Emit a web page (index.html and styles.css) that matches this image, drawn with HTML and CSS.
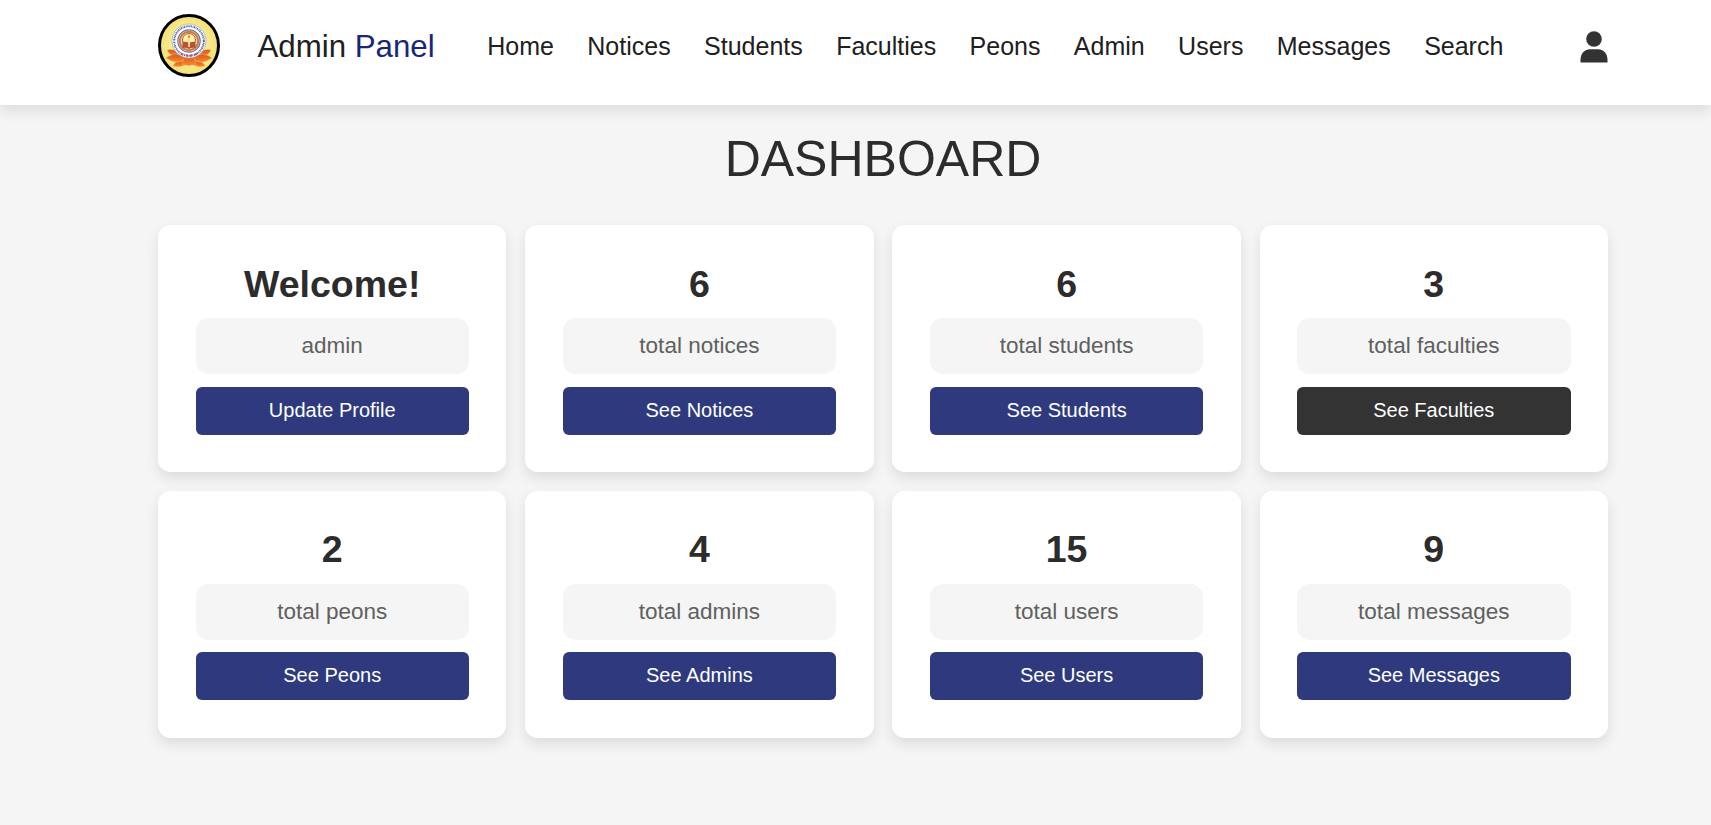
FILE: index.html
```html
<!DOCTYPE html>
<html lang="en">
<head>
<meta charset="utf-8">
<title>Dashboard</title>
<link rel="stylesheet" href="styles.css">
</head>
<body>
<header class="header">
  <svg class="logo" viewBox="0 0 62 63">
    <defs>
      <radialGradient id="bg"><stop offset="0" stop-color="#fffbd0"/><stop offset="1" stop-color="#f3e070"/></radialGradient>
      <linearGradient id="petal" x1="0" y1="0" x2="0" y2="1"><stop offset="0" stop-color="#d9561a"/><stop offset="1" stop-color="#f58b2c"/></linearGradient>
    </defs>
    <ellipse cx="31" cy="31.5" rx="29.5" ry="30" fill="url(#bg)" stroke="#000" stroke-width="3"/>
    <g fill="url(#petal)" stroke="#f6c56a" stroke-width=".4">
      <path d="M9 36q6-2 13 3v4q-10 0-13-7zM53 36q-6-2-13 3v4q10 0 13-7z"/>
      <path d="M15 52q2-6 13-5q-2 8-13 5zM47 52q-2-6-13-5q2 8 13 5z"/>
      <path d="M8 44q9-7 20-1q-6 10-20 1zM54 44q-9-7-20-1q6 10 20 1z"/>
      <path d="M24 52q0-9 7-11q7 2 7 11q-4-2-7 0q-3-2-7 0z"/>
    </g>
    <circle cx="31" cy="27" r="17" fill="#fff" stroke="#9da4b5" stroke-width=".7"/>
    <circle cx="31" cy="27" r="14.8" fill="none" stroke="#5867a5" stroke-width="2" stroke-dasharray="1.3 .7 .8 .6" pathLength="93"/>
    <circle cx="31" cy="27" r="11.2" fill="#eee3d7" stroke="#6876a4" stroke-width="1.2"/>
    <circle cx="31" cy="27" r="9.2" fill="none" stroke="#d77735" stroke-width="2"/>
    <circle cx="31" cy="26" r="6.5" fill="#fff3a5" stroke="#a95a35"/>
    <path d="M24.500 28q3.500-1 6.500 1q3-2 6.500-1v6q-3.500-1-6.500 1q-3-2-6.500-1z" fill="#b55335"/>
    <path d="M30.200 25h1.800v8h-1.800z" fill="#f9d9a2"/>
    <path d="M31 20.500q2 2.500 0 4q-2-1.500 0-4z" fill="#ef7a22"/>
    <path d="M23 39.500l2 1.200M28 41.500h2M32 41.500h2M37 40.700l2-1.200" stroke="#dc4545" stroke-width="1.800"/>
  </svg>
  <a class="brand">Admin <span class="brand-accent">Panel</span></a>
  <nav class="nav">
    <a>Home</a><a>Notices</a><a>Students</a><a>Faculties</a><a>Peons</a><a>Admin</a><a>Users</a><a>Messages</a><a>Search</a>
  </nav>
  <svg class="user" viewBox="0 0 28 32"><circle cx="14" cy="8" r="7.800"/><path d="M.5 31v-2C.5 22.500 4.500 18.300 10 18.300h8c5.500 0 9.500 4.200 9.500 10.700v2q0 .5-.5.5H1q-.5 0-.5-.5z"/></svg>
</header>
<main class="dashboard">
  <h1 class="heading">DASHBOARD</h1>
  <section class="cards">
    <article class="card"><h3>Welcome!</h3><p>admin</p><a class="btn">Update Profile</a></article>
    <article class="card"><h3>6</h3><p>total notices</p><a class="btn">See Notices</a></article>
    <article class="card"><h3>6</h3><p>total students</p><a class="btn">See Students</a></article>
    <article class="card"><h3>3</h3><p>total faculties</p><a class="btn btn-active">See Faculties</a></article>
    <article class="card"><h3>2</h3><p>total peons</p><a class="btn">See Peons</a></article>
    <article class="card"><h3>4</h3><p>total admins</p><a class="btn">See Admins</a></article>
    <article class="card"><h3>15</h3><p>total users</p><a class="btn">See Users</a></article>
    <article class="card"><h3>9</h3><p>total messages</p><a class="btn">See Messages</a></article>
  </section>
</main>
</body>
</html>
```
FILE: styles.css
```css
* { box-sizing: border-box; margin: 0; padding: 0; }
body {
  min-height: 825px;
  background: #f5f5f5;
  color: #2c2c2c;
  font-family: "Liberation Sans", Arial, sans-serif;
  overflow: hidden;
}
.header {
  display: flex;
  align-items: flex-start;
  height: 105px;
  padding: 14px 103px 0 158px;
  background: #fff;
  box-shadow: 0 6px 13px rgba(0, 0, 0, .1);
  white-space: nowrap;
}
.logo { width: 62px; height: 63px; }
.brand {
  margin-left: 37.500px;
  color: #202020;
  font-size: 31.250px;
  line-height: 65px;
}
.brand-accent { color: #17267a; }
.nav {
  display: flex;
  gap: 33.400px;
  margin-left: 52.500px;
  color: #202020;
  font-size: 25px;
  line-height: 65px;
}
.user {
  width: 28px;
  height: 32px;
  margin-top: 16.500px;
  margin-left: auto;
  fill: #333;
}
.dashboard { padding: 24px 103px 0 158px; }
.heading {
  margin-bottom: 35.200px;
  font-size: 50px;
  font-weight: 400;
  line-height: 61px;
  text-align: center;
}
.cards {
  display: grid;
  grid-template-columns: repeat(4, 1fr);
  gap: 18.750px;
}
.card {
  height: 246.850px;
  padding: 37.500px;
  border-radius: 12.500px;
  background: #fff;
  box-shadow: 0 6px 13px rgba(0, 0, 0, .1);
  text-align: center;
}
.card h3 { font-size: 37.500px; line-height: 43px; }
.card p {
  height: 56px;
  margin: 12.500px 0 12.400px;
  border-radius: 12.500px;
  background: #f5f5f5;
  color: #606060;
  font-size: 22.500px;
  line-height: 55px;
}
.btn {
  display: block;
  height: 48px;
  border-radius: 6px;
  background: #2e3a7d;
  color: #fff;
  font-size: 20px;
  line-height: 46px;
}
.btn-active { background: #333; }
```
